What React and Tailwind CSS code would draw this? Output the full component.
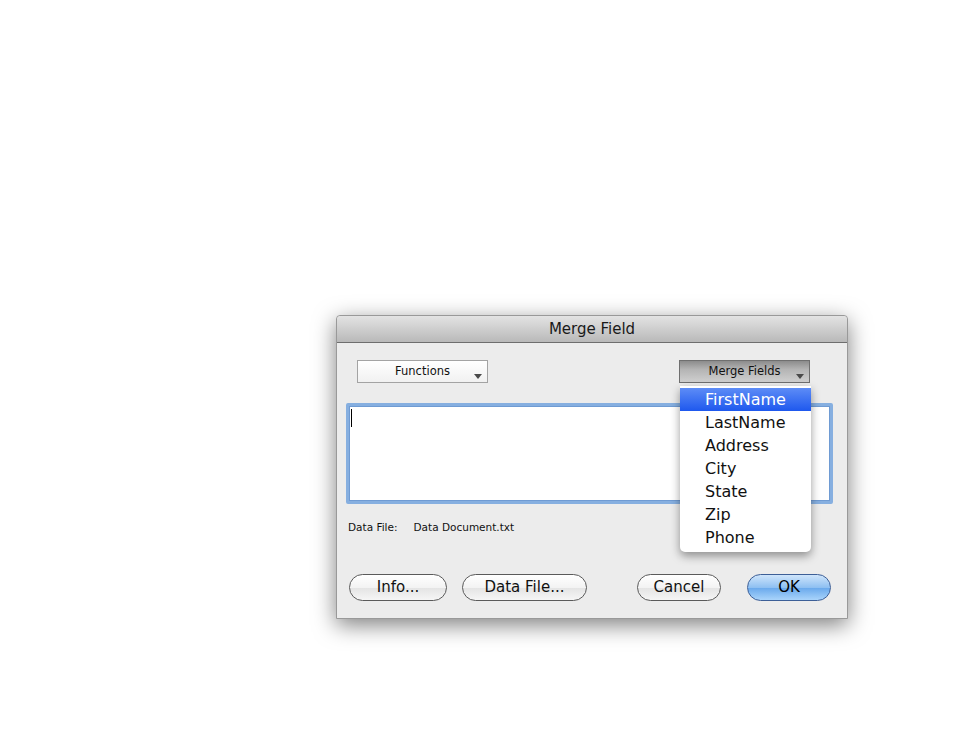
import React from "react";

const font = { fontFamily: '"DejaVu Sans", "Liberation Sans", sans-serif' };

function Arrow() {
  return (
    <svg width="8" height="5" viewBox="0 0 8 5" className="absolute right-[5px] top-[13px]">
      <path d="M0 0 L8 0 L4 5 Z" fill="#4a4a4a" />
    </svg>
  );
}

function PillButton({ children, width, blue }) {
  return (
    <div
      className={
        "flex h-[27px] items-center justify-center rounded-full border text-[15px] " +
        (blue
          ? "border-[#3d5f97] bg-[linear-gradient(#cfe5fb,#8fc0f2_50%,#6aa9ec_52%,#a9d4fb)] text-black"
          : "border-[#5a5a5a] bg-[linear-gradient(#ffffff,#f3f3f3_50%,#e4e4e4_52%,#f6f6f6)] text-[#111]")
      }
      style={{ width }}
    >
      {children}
    </div>
  );
}

export default function App() {
  const items = ["FirstName", "LastName", "Address", "City", "State", "Zip", "Phone"];
  return (
    <div className="min-h-[737px] w-[954px] bg-white pl-[336px] pt-[315px]" style={font}>
      <div className="relative w-[512px] rounded-t-[4px] border border-[#999] bg-[#ececec] shadow-[0_6px_22px_rgba(0,0,0,0.5)]">
        {/* Title bar */}
        <div className="flex h-[27px] items-center justify-center rounded-t-[4px] border-b border-[#6e6e6e] bg-[linear-gradient(#e3e3e3,#b9b9b9)] text-[15px] text-[#1a1a1a]">
          Merge Field
        </div>

        {/* Popups row */}
        <div className="mt-[17px] flex items-start">
          <div className="relative ml-[20px] flex h-[23px] w-[131px] items-center justify-center border border-[#a3a3a3] bg-[linear-gradient(#ffffff,#f1f1f1)] text-[11.5px] text-[#111]">
            Functions
            <Arrow />
          </div>
          <div className="relative ml-auto mr-[37px] flex h-[23px] w-[131px] items-center justify-center border border-[#6f6f6f] bg-[linear-gradient(#8c8c8c,#b4b4b4_40%,#cfcfcf)] text-[11.5px] text-[#111]">
            Merge Fields
            <Arrow />
            {/* Dropdown menu */}
            <div className="absolute left-[0px] top-[25px] z-10 w-[131px] rounded-b-[5px] bg-white pb-[3px] pt-[2px] shadow-[0_4px_10px_rgba(0,0,0,0.4)]">
              {items.map((it, i) => (
                <div
                  key={it}
                  className={
                    "flex h-[23px] items-center pl-[25px] text-[16px] " +
                    (i === 0
                      ? "bg-[linear-gradient(#5d8cf6,#1e58ee)] text-white"
                      : "text-[#111]")
                  }
                >
                  {it}
                </div>
              ))}
            </div>
          </div>
        </div>

        {/* Text area */}
        <div className="ml-[9px] mr-[14px] mt-[20px] h-[101px] rounded-[2px] border-[3px] border-[#86afe0] bg-white p-[1px] shadow-[inset_0_0_0_1px_#6f9bd3]">
          <div className="ml-[1px] mt-[2px] h-[18px] w-[1px] bg-black" />
        </div>

        {/* Data file */}
        <div className="ml-[11px] mt-[17px] flex h-[14px] items-center text-[10.5px] text-[#111]">
          <span>Data File:</span>
          <span className="ml-[16px]">Data Document.txt</span>
        </div>

        {/* Buttons */}
        <div className="mb-[17px] ml-[12px] mr-[16px] mt-[39px] flex items-center">
          <PillButton width="98px">Info...</PillButton>
          <div className="ml-[15px]">
            <PillButton width="125px">Data File...</PillButton>
          </div>
          <div className="ml-auto">
            <PillButton width="84px">Cancel</PillButton>
          </div>
          <div className="ml-[26px]">
            <PillButton width="84px" blue>
              OK
            </PillButton>
          </div>
        </div>
      </div>
    </div>
  );
}
